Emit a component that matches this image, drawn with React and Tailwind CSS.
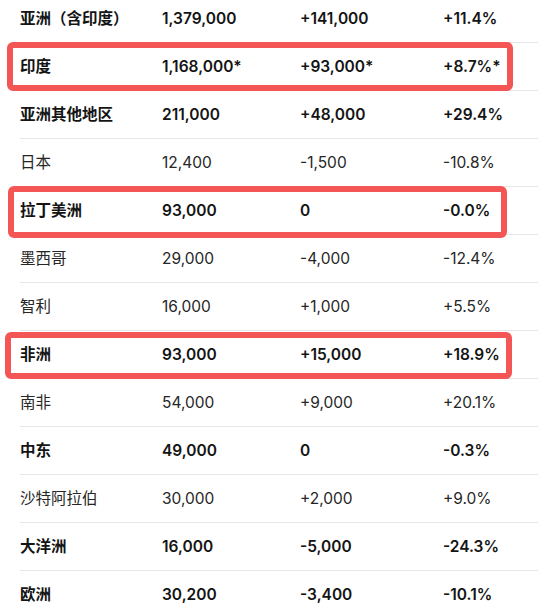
import React from 'react';

const rows = [
  { name: '亚洲（含印度）', total: '1,379,000', change: '+141,000', pct: '+11.4%', bold: true },
  { name: '印度', total: '1,168,000*', change: '+93,000*', pct: '+8.7%*', bold: true, mark: 'top-[-1px] left-[7px] w-[506px] h-[49px]' },
  { name: '亚洲其他地区', total: '211,000', change: '+48,000', pct: '+29.4%', bold: true },
  { name: '日本', total: '12,400', change: '-1,500', pct: '-10.8%' },
  { name: '拉丁美洲', total: '93,000', change: '0', pct: '-0.0%', bold: true, mark: 'top-[-1px] left-[8px] w-[499px] h-[52px]' },
  { name: '墨西哥', total: '29,000', change: '-4,000', pct: '-12.4%' },
  { name: '智利', total: '16,000', change: '+1,000', pct: '+5.5%' },
  { name: '非洲', total: '93,000', change: '+15,000', pct: '+18.9%', bold: true, mark: 'top-[1px] left-[5px] w-[507px] h-[47px]' },
  { name: '南非', total: '54,000', change: '+9,000', pct: '+20.1%' },
  { name: '中东', total: '49,000', change: '0', pct: '-0.3%', bold: true },
  { name: '沙特阿拉伯', total: '30,000', change: '+2,000', pct: '+9.0%' },
  { name: '大洋洲', total: '16,000', change: '-5,000', pct: '-24.3%', bold: true },
  { name: '欧洲', total: '30,200', change: '-3,400', pct: '-10.1%', bold: true },
];

const App = () => {
  return (
    <div
      className="w-[538px] h-[615px] overflow-hidden bg-white"
      style={{ fontFamily: 'Inter, "Noto Sans CJK SC", sans-serif' }}
    >
      <div className="mt-[-5px]">
        {rows.map((r, i) => (
          <div key={i} className="relative">
            <div
              className={`ml-[20px] h-[48px] flex items-center border-b border-[#e6e6e6] text-[15.5px] ${
                r.bold ? 'font-semibold text-[#141414]' : 'font-normal text-[#262626]'
              }`}
            >
              <div className="w-[142px]">{r.name}</div>
              <div className="w-[138px]">{r.total}</div>
              <div className="w-[143px]">{r.change}</div>
              <div>{r.pct}</div>
            </div>
            {r.mark && (
              <div className={`absolute ${r.mark} border-[6px] border-[#f45656] rounded-[6px] pointer-events-none`}></div>
            )}
          </div>
        ))}
      </div>
    </div>
  );
};

export default App;
